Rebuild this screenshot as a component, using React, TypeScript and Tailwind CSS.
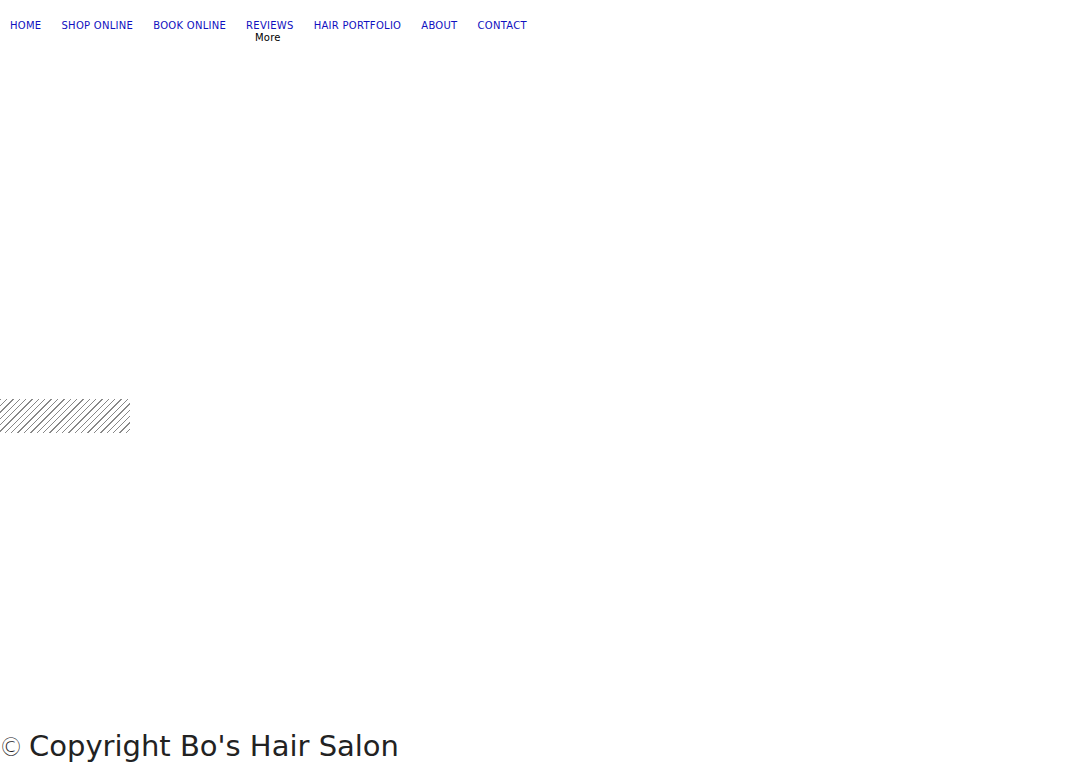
const links = ["Home", "Shop Online", "Book Online", "Reviews", "Hair Portfolio", "About", "Contact"]

export default function App() {
  return (
    <div className="flex h-[768px] w-full flex-col overflow-hidden bg-white font-['DejaVu_Sans',sans-serif]">
      <nav className="pt-[19px]">
        <ul className="flex gap-[20px] pl-[10px] text-[10px] uppercase leading-[13px] tracking-[0.28px] text-[#1010c0]">
          {links.map((l) => (
            <li key={l}>
              <a href="#">{l}</a>
            </li>
          ))}
        </ul>
        <div className="pl-[255px] text-[10px] leading-[12px] tracking-[0.2px] text-black">More</div>
      </nav>
      <div className="mt-[355px] h-[34px] w-[130px] bg-[repeating-linear-gradient(135deg,#888_0_1px,transparent_1px_4.5px)]" />
      <footer className="mt-auto flex items-baseline pb-[2px] text-[29px] leading-[36px] text-[#222]">
        <span className="-ml-[1px] w-[30px] text-[24px] font-extralight">©</span>
        <span>Copyright Bo's Hair Salon</span>
      </footer>
    </div>
  )
}
